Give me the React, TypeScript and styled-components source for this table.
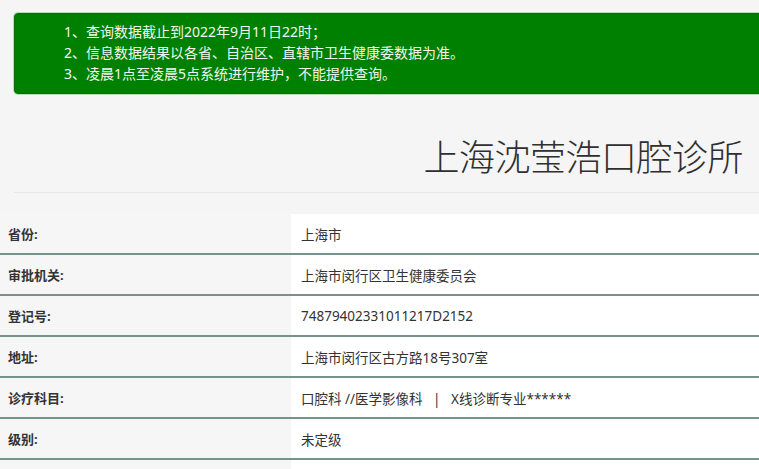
import React from "react";
import styled, { createGlobalStyle } from "styled-components";

const GlobalStyle = createGlobalStyle`
  html, body {
    margin: 0;
    padding: 0;
    background: #f5f5f5;
    overflow-x: hidden;
  }
  body {
    font-family: "Noto Sans", "Noto Sans CJK SC", "Liberation Sans", sans-serif;
    color: #333;
  }
`;

const Page = styled.div`
  width: 100%;
  padding-top: 13px;
`;

const Notice = styled.div`
  margin: 0 -12px 0 14px;
  background: #008000;
  border: 1px solid #0b6b0b;
  box-shadow: 0 0 0 1px #b9dfb2;
  border-radius: 4px;
  padding: 7px 0 9px 49px;
  color: #f2f7f2;
  font-size: 14px;
  line-height: 21px;
`;

const NoticeLine = styled.div`
  white-space: nowrap;
`;

const TitleBar = styled.div`
  margin-left: 14px;
  padding: 43px 16px 19px 0;
  border-bottom: 1px solid #e8e8e8;
  text-align: right;
`;

const Title = styled.h1`
  margin: 0;
  font-family: "Noto Sans CJK SC", sans-serif;
  font-size: 36px;
  line-height: 36px;
  font-weight: 300;
  color: #2f2f2f;
  letter-spacing: -0.5px;
`;

const Table = styled.div`
  margin-top: 21px;
  display: flex;
  flex-direction: column;
`;

const Row = styled.div`
  display: grid;
  grid-template-columns: 291px 1fr;
  height: 39px;
  border-bottom: 2px solid #739486;
`;

const Label = styled.div`
  background: #f6f6f6;
  display: flex;
  align-items: center;
  padding-left: 8px;
  font-size: 13px;
  font-weight: 700;
  color: #333;
`;

const Value = styled.div`
  background: #ffffff;
  display: flex;
  align-items: center;
  padding-left: 10px;
  font-size: 13.5px;
  color: #333;
  white-space: pre;
`;

const rows: [string, string][] = [
  ["省份:", "上海市"],
  ["审批机关:", "上海市闵行区卫生健康委员会"],
  ["登记号:", "74879402331011217D2152"],
  ["地址:", "上海市闵行区古方路18号307室"],
  ["诊疗科目:", "口腔科 //医学影像科   |   X线诊断专业******"],
  ["级别:", "未定级"],
  ["有效期:", "2019年11月22日至2024年11月21日"],
];

export default function App() {
  return (
    <Page>
      <GlobalStyle />
      <Notice>
        <NoticeLine>1、查询数据截止到2022年9月11日22时；</NoticeLine>
        <NoticeLine>2、信息数据结果以各省、自治区、直辖市卫生健康委数据为准。</NoticeLine>
        <NoticeLine>3、凌晨1点至凌晨5点系统进行维护，不能提供查询。</NoticeLine>
      </Notice>
      <TitleBar>
        <Title>上海沈莹浩口腔诊所</Title>
      </TitleBar>
      <Table>
        {rows.map(([k, v]) => (
          <Row key={k}>
            <Label>{k}</Label>
            <Value>{v}</Value>
          </Row>
        ))}
      </Table>
    </Page>
  );
}
